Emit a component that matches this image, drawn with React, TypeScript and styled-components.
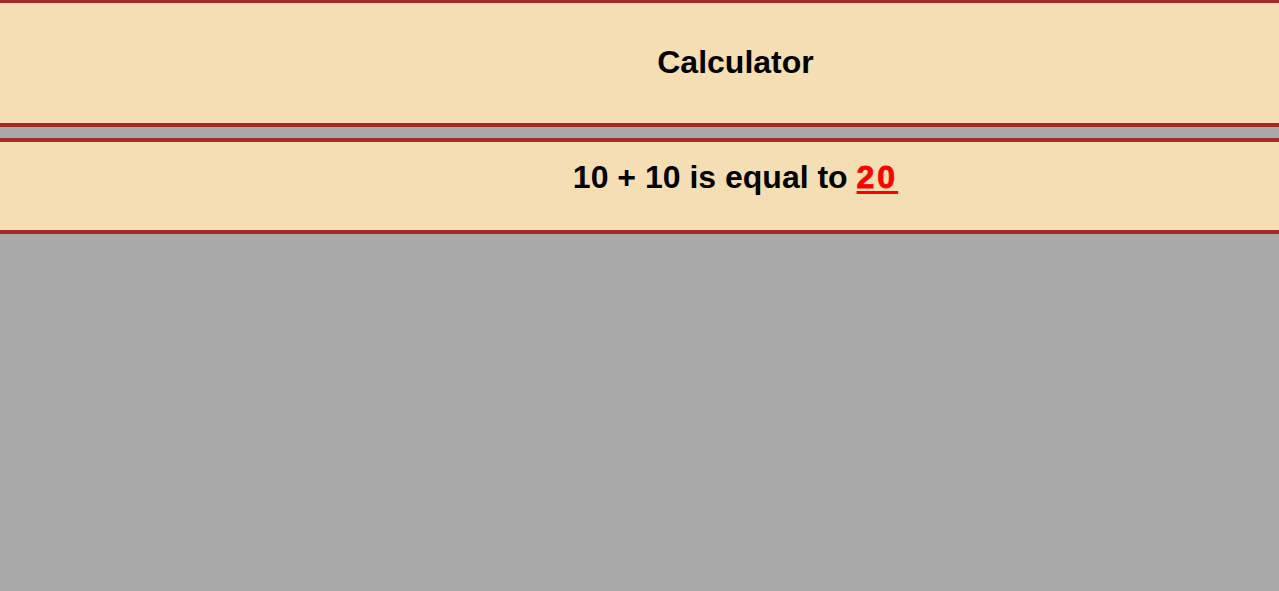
import React from "react";
import styled, { createGlobalStyle } from "styled-components";

const Global = createGlobalStyle`
  html, body {
    margin: 0;
    padding: 0;
    background: #a9a9a9;
    font-family: "Liberation Sans", Arial, sans-serif;
  }
`;

const Page = styled.div`
  display: flex;
  flex-direction: column;
  gap: 11px;
`;

const Panel = styled.section<{ $top?: boolean }>`
  background: #f5deb3;
  border-top: ${(p) => (p.$top ? "3px" : "4px")} solid #a52a2a;
  border-bottom: 4px solid #a52a2a;
  padding-left: 192px;
  display: flex;
  justify-content: center;
`;

const Title = styled.h1`
  margin: 0;
  padding: 41px 0 42px;
  font-size: 32px;
  font-weight: bold;
  color: #000;
`;

const Result = styled.h2`
  margin: 0;
  padding: 17px 0 34px;
  font-size: 32px;
  font-weight: bold;
  color: #000;
`;

const Answer = styled.span`
  color: #ff0000;
  letter-spacing: 3px;
  -webkit-text-stroke: 0.8px #ff0000;
  text-decoration: underline;
  text-decoration-thickness: 3px;
  text-underline-offset: 3px;
`;

export default function App() {
  const a = 10;
  const b = 10;
  return (
    <>
      <Global />
      <Page>
        <Panel $top>
          <Title>Calculator</Title>
        </Panel>
        <Panel>
          <Result>
            {a} + {b} is equal to <Answer>{a + b}</Answer>
          </Result>
        </Panel>
      </Page>
    </>
  );
}
